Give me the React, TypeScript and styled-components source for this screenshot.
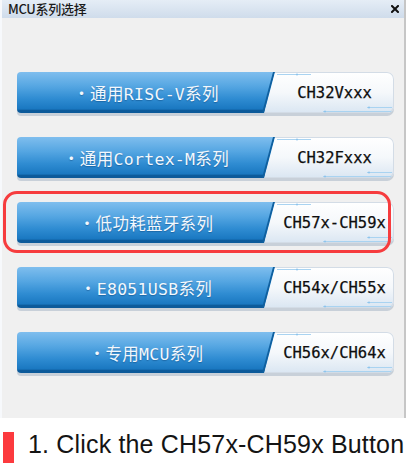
import React from "react";
import styled, { createGlobalStyle, css } from "styled-components";

const Global = createGlobalStyle`
  html, body { margin: 0; padding: 0; background: #ffffff; }
  body { width: 409px; height: 463px; overflow: hidden; font-family: "Noto Sans CJK SC", sans-serif; }
`;

const Page = styled.div`
  width: 409px;
  height: 463px;
  display: flex;
  flex-direction: column;
  background: #ffffff;
  overflow: hidden;
`;

const Window = styled.section`
  width: 406px;
  height: 418px;
  box-sizing: border-box;
  flex: none;
  background: #f0f0f0;
  border-left: 2px solid #f7f9fc;
  border-right: 2px solid #c6c6c6;
  display: flex;
  flex-direction: column;
`;

const TitleBar = styled.header`
  height: 18px;
  flex: none;
  display: flex;
  align-items: center;
  justify-content: space-between;
  padding: 0 5px 0 6px;
  background: linear-gradient(#e5edf6, #cfdceb);
  font: 500 13px/18px "Noto Sans CJK SC", sans-serif;
  color: #1a1a1a;
`;

const Title = styled.span`
  letter-spacing: -0.3px;
`;

const CloseIcon = styled.svg`
  width: 8px;
  height: 8px;
  display: block;
`;

const Body = styled.div`
  display: flex;
  flex-direction: column;
  gap: 24px;
  padding: 54px 0 0 15px;
`;

const Choice = styled.div<{ $highlight?: boolean }>`
  position: relative;
  width: 377px;
  height: 41px;
  display: flex;
  border-radius: 4px 7px 7px 4px;
  box-shadow: 0 3px 0 #c8d0d9;
  ${(p) =>
    p.$highlight &&
    css`
      &::after {
        content: "";
        position: absolute;
        left: -14px;
        top: -11px;
        width: 388px;
        height: 62px;
        box-sizing: border-box;
        border: 3.5px solid #f63c3e;
        border-radius: 14px;
        pointer-events: none;
        z-index: 3;
      }
    `}
`;

const BlueSide = styled.div`
  position: relative;
  z-index: 1;
  flex: none;
  width: 258px;
  height: 100%;
  box-sizing: border-box;
  border-radius: 4px 0 0 4px;
  clip-path: polygon(0 0, 100% 0, calc(100% - 11px) 100%, 0 100%);
  background: linear-gradient(
    #7fbeee 0%,
    #55a6e2 35%,
    #2f8cd2 65%,
    #1a78c1 90%,
    #0c5a9a 94%,
    #0c5a9a 100%
  );
  display: flex;
  align-items: center;
  justify-content: center;
  color: #f3f8fd;
  font: 16.5px "DejaVu Sans Mono", "Noto Sans CJK SC", monospace;
  letter-spacing: 0.3px;
  white-space: nowrap;
  text-shadow: 0 1px 1px rgba(0, 45, 95, 0.35);

  &::after {
    content: "";
    position: absolute;
    inset: 0;
    background: #10609f;
    clip-path: polygon(calc(100% - 2px) 0, 100% 0, calc(100% - 11px) 100%, calc(100% - 13px) 100%);
  }
`;

const WhiteSide = styled.div`
  position: relative;
  flex: 1;
  margin-left: -14px;
  padding-left: 14px;
  border-radius: 0 7px 7px 0;
  background: linear-gradient(#ffffff 0%, #f5f8fb 50%, #dae6f2 100%);
  box-shadow: inset 0 0 0 1px #d3dce6;
  display: flex;
  align-items: center;
  justify-content: center;
  overflow: hidden;
  font: 15.5px "DejaVu Sans Mono", monospace;
  color: #0e0e0e;
  white-space: nowrap;
  -webkit-text-stroke: 0.25px #0e0e0e;
`;

const Decor = styled.svg`
  position: absolute;
  left: 0;
  top: 0;
  width: 133px;
  height: 41px;
  pointer-events: none;
`;

const Caption = styled.div`
  display: flex;
  align-items: flex-start;
  gap: 14px;
  margin-top: 14px;
  padding-left: 3px;
  height: 31px;
`;

const Marker = styled.span`
  flex: none;
  width: 11px;
  height: 31px;
  background: #fc3a3e;
`;

const CaptionText = styled.p`
  margin: 0;
  font: 25px/25px "Liberation Sans", Arial, sans-serif;
  letter-spacing: 0.17px;
  color: #141414;
  white-space: nowrap;
`;

const items = [
  { name: "・通用RISC-V系列", chip: "CH32Vxxx" },
  { name: "・通用Cortex-M系列", chip: "CH32Fxxx" },
  { name: "・低功耗蓝牙系列", chip: "CH57x-CH59x", highlight: true },
  { name: "・E8051USB系列", chip: "CH54x/CH55x" },
  { name: "・专用MCU系列", chip: "CH56x/CH64x" },
];

function Ornament() {
  return (
    <Decor viewBox="0 0 133 41">
      <line x1="16" y1="2.5" x2="50" y2="2.5" stroke="#a9d3f1" strokeWidth="1" />
      <circle cx="36" cy="2.5" r="1" fill="#8cc3ec" />
      <line x1="106" y1="35.5" x2="131" y2="35.5" stroke="#a9d3f1" strokeWidth="1" />
      <circle cx="108" cy="35.5" r="1" fill="#8cc3ec" />
      <line x1="62" y1="39.5" x2="131" y2="39.5" stroke="#a9d3f1" strokeWidth="1" />
      <circle cx="64" cy="39.5" r="1" fill="#8cc3ec" />
    </Decor>
  );
}

export default function App() {
  return (
    <>
      <Global />
      <Page>
        <Window>
          <TitleBar>
            <Title>MCU系列选择</Title>
            <CloseIcon viewBox="0 0 8 8">
              <path d="M1 1 L7 7 M7 1 L1 7" stroke="#111" strokeWidth="2" strokeLinecap="square" />
            </CloseIcon>
          </TitleBar>
          <Body>
            {items.map((it) => (
              <Choice key={it.chip} $highlight={it.highlight}>
                <BlueSide>{it.name}</BlueSide>
                <WhiteSide>
                  <Ornament />
                  {it.chip}
                </WhiteSide>
              </Choice>
            ))}
          </Body>
        </Window>
        <Caption>
          <Marker />
          <CaptionText>1. Click the CH57x-CH59x Button</CaptionText>
        </Caption>
      </Page>
    </>
  );
}
